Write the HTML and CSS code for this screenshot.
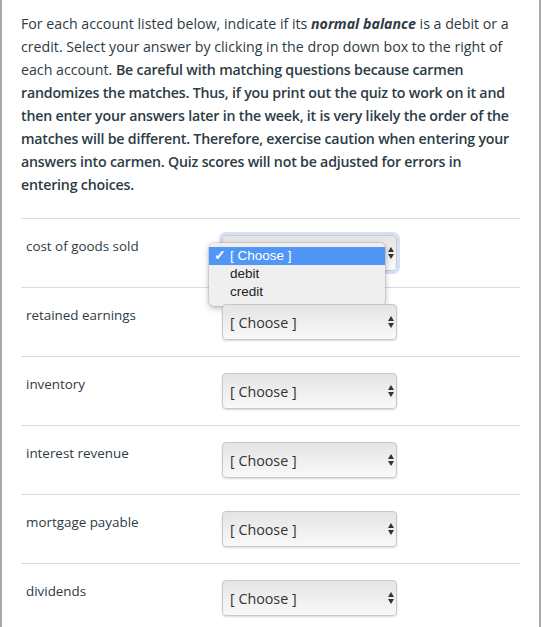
FILE: index.html
```html
<!DOCTYPE html>
<html lang="en">
<head>
    <meta charset="UTF-8">
    <title>Quiz Matching</title>
    <link rel="stylesheet" href="styles.css">
</head>
<body>
    <div class="quiz">
        <p class="intro">For each account listed below, indicate if its <strong><em>normal balance</em></strong> is a debit or a credit. Select your answer by clicking in the drop down box to the right of each account. <strong>Be careful with matching questions because carmen randomizes the matches. Thus, if you print out the quiz to work on it and then enter your answers later in the week, it is very likely the order of the matches will be different. Therefore, exercise caution when entering your answers into carmen. Quiz scores will not be adjusted for errors in entering choices.</strong></p>

        <div class="matches">
            <div class="match">
                <div class="label">cost of goods sold</div>
                <div class="select focused">
                    <span>[ Choose ]</span>
                    <span class="arrows"></span>
                    <ul class="popup">
                        <li class="selected"><span class="check">✓</span>[ Choose ]</li>
                        <li>debit</li>
                        <li>credit</li>
                    </ul>
                </div>
            </div>
            <div class="match">
                <div class="label">retained earnings</div>
                <div class="select"><span>[ Choose ]</span><span class="arrows"></span></div>
            </div>
            <div class="match">
                <div class="label">inventory</div>
                <div class="select"><span>[ Choose ]</span><span class="arrows"></span></div>
            </div>
            <div class="match">
                <div class="label">interest revenue</div>
                <div class="select"><span>[ Choose ]</span><span class="arrows"></span></div>
            </div>
            <div class="match">
                <div class="label">mortgage payable</div>
                <div class="select"><span>[ Choose ]</span><span class="arrows"></span></div>
            </div>
            <div class="match">
                <div class="label">dividends</div>
                <div class="select"><span>[ Choose ]</span><span class="arrows"></span></div>
            </div>
        </div>
    </div>
</body>
</html>
```
FILE: styles.css
```css
body {
    margin: 0;
    padding: 0;
    background-color: #fff;
    font-family: "Open Sans", Lato, sans-serif;
    color: #2d3b45;
}
.quiz {
    width: 537px;
    height: 627px;
    border-left: 2px solid #a9a9a9;
    border-right: 2px solid #a9a9a9;
    overflow: hidden;
}
.intro {
    margin: 0;
    padding: 12px 20px 0 19px;
    font-size: 14.2px;
    line-height: 23px;
}
.intro strong {
    font-weight: 600;
    letter-spacing: -0.2px;
}
.intro strong em {
    font-weight: 700;
    letter-spacing: 0;
}
.matches {
    margin: 22px 19px 0 19px;
}
.match {
    display: flex;
    height: 68px;
    border-top: 1px solid #dcdcdc;
}
.label {
    width: 196px;
    padding: 19px 0 0 5px;
    font-size: 13.4px;
    line-height: 16px;
}
.select {
    position: relative;
    display: flex;
    align-items: center;
    justify-content: space-between;
    box-sizing: border-box;
    width: 175px;
    height: 36px;
    margin-top: 16px;
    padding: 0 6px 0 7px;
    border: 1px solid #c8c8c8;
    border-radius: 4px;
    background: linear-gradient(#e4e4e4, #f9f9f9);
    box-shadow: 0 1px 2px rgba(0, 0, 0, 0.15);
    font-size: 14.3px;
    color: #333;
}
.select.focused {
    box-shadow: 0 0 0 3px #d5e0f7;
}
.arrows {
    width: 0;
    height: 12px;
    position: relative;
}
.arrows::before, .arrows::after {
    content: "";
    position: absolute;
    right: -4px;
    border-left: 3.5px solid transparent;
    border-right: 3.5px solid transparent;
}
.arrows::before {
    top: 0;
    border-bottom: 5px solid #333;
}
.arrows::after {
    bottom: 0;
    border-top: 5px solid #333;
}
.popup {
    position: absolute;
    left: -14px;
    top: 7px;
    width: 176px;
    margin: 0;
    padding: 4px 0 5px;
    list-style: none;
    background-color: #efefef;
    border-radius: 5px;
    box-shadow: 0 2px 6px rgba(0, 0, 0, 0.3), 0 0 0 1px rgba(0, 0, 0, 0.08);
    font-family: "Liberation Sans", Arial, sans-serif;
    font-size: 13.5px;
    color: #222;
}
.popup li {
    position: relative;
    height: 18px;
    line-height: 18px;
    padding-left: 21px;
}
.popup li.selected {
    background-color: #4f96f6;
    color: #fff;
}
.check {
    position: absolute;
    left: 5px;
    top: 0;
    font-weight: bold;
}
```
